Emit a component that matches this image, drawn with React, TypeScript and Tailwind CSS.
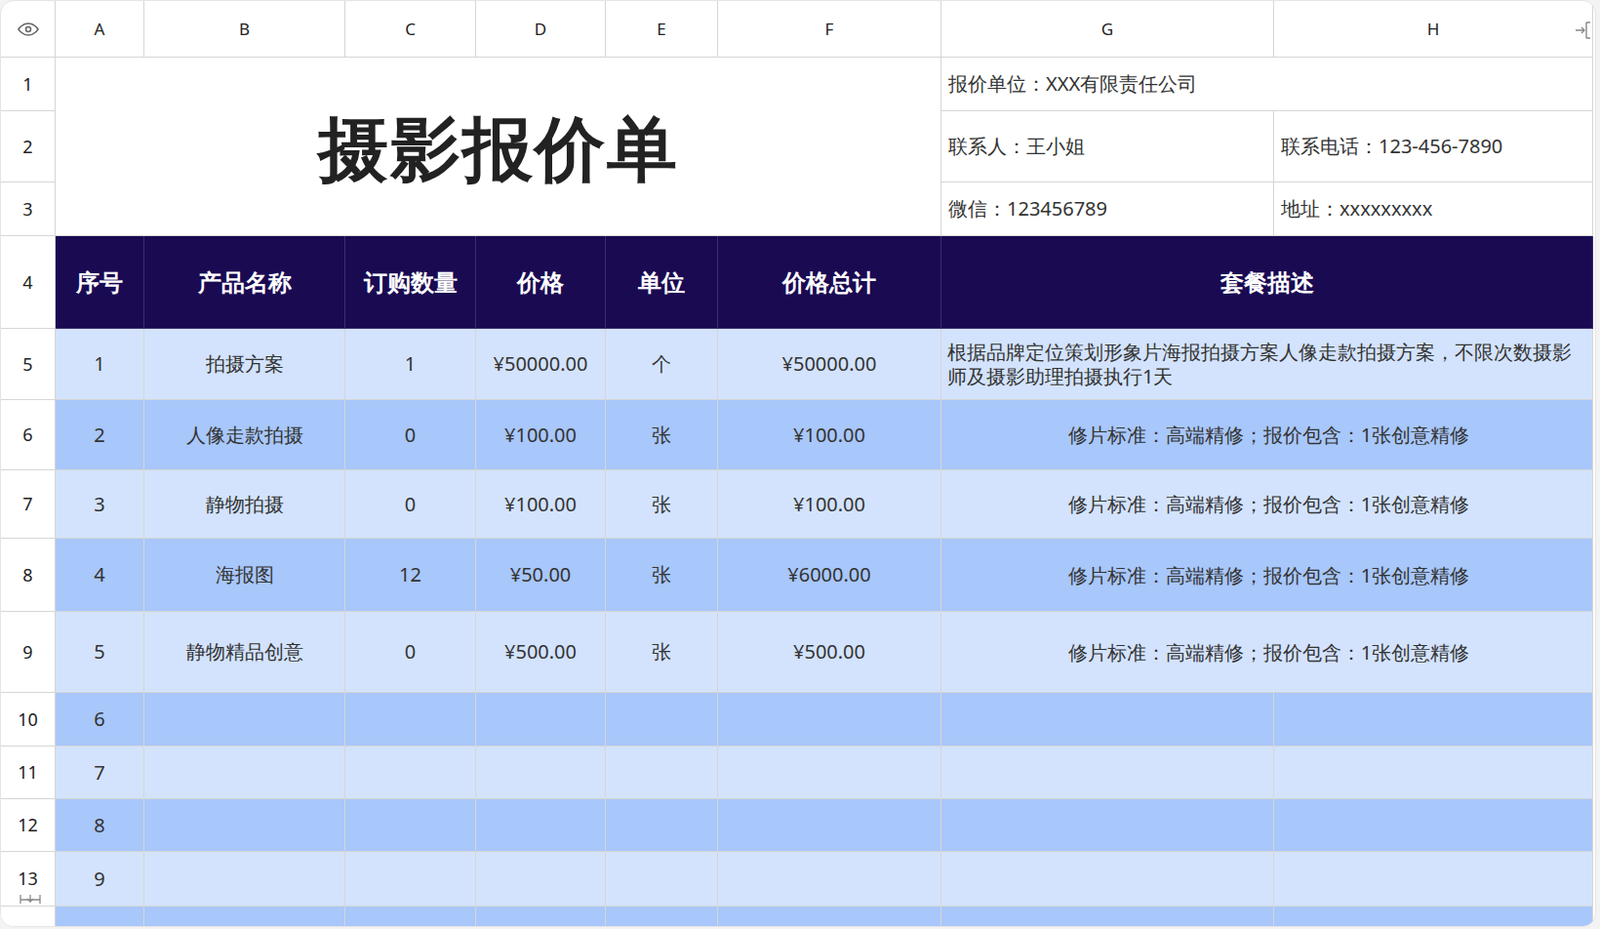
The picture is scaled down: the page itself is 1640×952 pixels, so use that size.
import React from "react";

const data = [
  ["1", "拍摄方案", "1", "¥50000.00", "个", "¥50000.00", "根据品牌定位策划形象片海报拍摄方案人像走款拍摄方案，不限次数摄影师及摄影助理拍摄执行1天"],
  ["2", "人像走款拍摄", "0", "¥100.00", "张", "¥100.00", "修片标准：高端精修；报价包含：1张创意精修"],
  ["3", "静物拍摄", "0", "¥100.00", "张", "¥100.00", "修片标准：高端精修；报价包含：1张创意精修"],
  ["4", "海报图", "12", "¥50.00", "张", "¥6000.00", "修片标准：高端精修；报价包含：1张创意精修"],
  ["5", "静物精品创意", "0", "¥500.00", "张", "¥500.00", "修片标准：高端精修；报价包含：1张创意精修"],
];

const b = "border-r border-b border-[#d6d6d6]";
const rn = `${b} bg-white flex items-center justify-center text-[18px] text-[#222]`;
const info = `${b} flex items-center px-[7px] text-[20px] text-[#333]`;
const hd = "border-r border-b border-[#3a2f6b] bg-[#1a0a52] text-white font-bold text-[24px] flex items-center justify-center";

export default function App() {
  const light = "bg-[#d3e3fd]";
  const dark = "bg-[#a8c7fa]";
  return (
    <div className="w-[1640px] h-[952px] bg-[#f3f3f3] overflow-hidden font-['Inter','Noto_Sans_CJK_SC',sans-serif]">
      <div className="w-[1636px] h-[950px] bg-white rounded-[14px] overflow-hidden border border-[#e5e5e5]">
        <div className="grid text-[#333] grid-cols-[56px_91px_206px_134px_133px_115px_229px_341px_327px] grid-rows-[58px_55px_73px_55px_95px_73px_72px_70px_75px_83px_55px_54px_54px_56px_22px]">
          <div className={`${b} flex items-center justify-center`}>
            <svg width="24" height="24" viewBox="0 0 24 24" fill="none" stroke="#666" strokeWidth="1.6">
              <path d="M2 12s3.5-6 10-6 10 6 10 6-3.5 6-10 6S2 12 2 12z" />
              <circle cx="12" cy="12" r="2.5" />
            </svg>
          </div>
          {["A", "B", "C", "D", "E", "F", "G"].map((c) => (
            <div key={c} className={`${b} flex items-center justify-center text-[17px] text-[#222]`}>{c}</div>
          ))}
          <div className={`${b} relative flex items-center justify-center text-[17px] text-[#222]`}>
            H
            <svg className="absolute right-[-4px] top-[20px]" width="22" height="20" viewBox="0 0 22 20" fill="none" stroke="#888" strokeWidth="1.4">
              <path d="M1 10h9M7 7l3 3-3 3M12 2v16M12 2h4M12 18h4" />
            </svg>
          </div>

          <div className={`${rn} col-start-1 row-start-2`}>1</div>
          <div className={`${rn} col-start-1 row-start-3`}>2</div>
          <div className={`${rn} col-start-1 row-start-4`}>3</div>
          <div className={`${b} col-start-2 col-end-8 row-start-2 row-end-5 flex items-center justify-center text-[72px] font-bold text-[#222] tracking-[2px]`}>
            摄影报价单
          </div>
          <div className={`${info} col-start-8 col-end-10 row-start-2`}>报价单位：XXX有限责任公司</div>
          <div className={`${info} col-start-8 row-start-3`}>联系人：王小姐</div>
          <div className={`${info} col-start-9 row-start-3`}>联系电话：123-456-7890</div>
          <div className={`${info} col-start-8 row-start-4`}>微信：123456789</div>
          <div className={`${info} col-start-9 row-start-4`}>地址：xxxxxxxxx</div>

          <div className={rn}>4</div>
          {["序号", "产品名称", "订购数量", "价格", "单位", "价格总计"].map((h) => (
            <div key={h} className={hd}>{h}</div>
          ))}
          <div className={`${hd} col-span-2`}>套餐描述</div>

          {data.map((r, i) => {
            const bg = i % 2 === 0 ? light : dark;
            return (
              <React.Fragment key={i}>
                <div className={rn}>{i + 5}</div>
                {r.slice(0, 6).map((v, j) => (
                  <div key={j} className={`${b} ${bg} flex items-center justify-center text-[20px]`}>{v}</div>
                ))}
                <div className={`${b} ${bg} col-span-2 flex items-center text-[20px] leading-[25px] pl-[6px] pr-[2px] ${i === 0 ? "justify-start" : "justify-center"}`}>
                  {r[6]}
                </div>
              </React.Fragment>
            );
          })}

          {[6, 7, 8, 9, 10].map((n, i) => {
            const bg = i % 2 === 0 ? dark : light;
            return (
              <React.Fragment key={n}>
                <div className={`${rn} relative`}>
                  {i < 4 ? n + 4 : ""}
                  {i === 3 && (
                    <svg className="absolute left-[18px] bottom-[-14px]" width="24" height="26" viewBox="0 0 24 26" fill="none" stroke="#888" strokeWidth="1.3">
                      <path d="M2 1v9M22 1v9M2 6h20M12 1v7M9 5l3 3 3-3M2 16v9M22 16v9M2 20h20M12 25v-7M9 21l3-3 3 3" />
                    </svg>
                  )}
                </div>
                {Array.from({ length: 8 }).map((_, j) => (
                  <div key={j} className={`${b} ${bg} flex items-center justify-center text-[20px]`}>{j === 0 && i < 4 ? n : ""}</div>
                ))}
              </React.Fragment>
            );
          })}
        </div>
      </div>
    </div>
  );
}
